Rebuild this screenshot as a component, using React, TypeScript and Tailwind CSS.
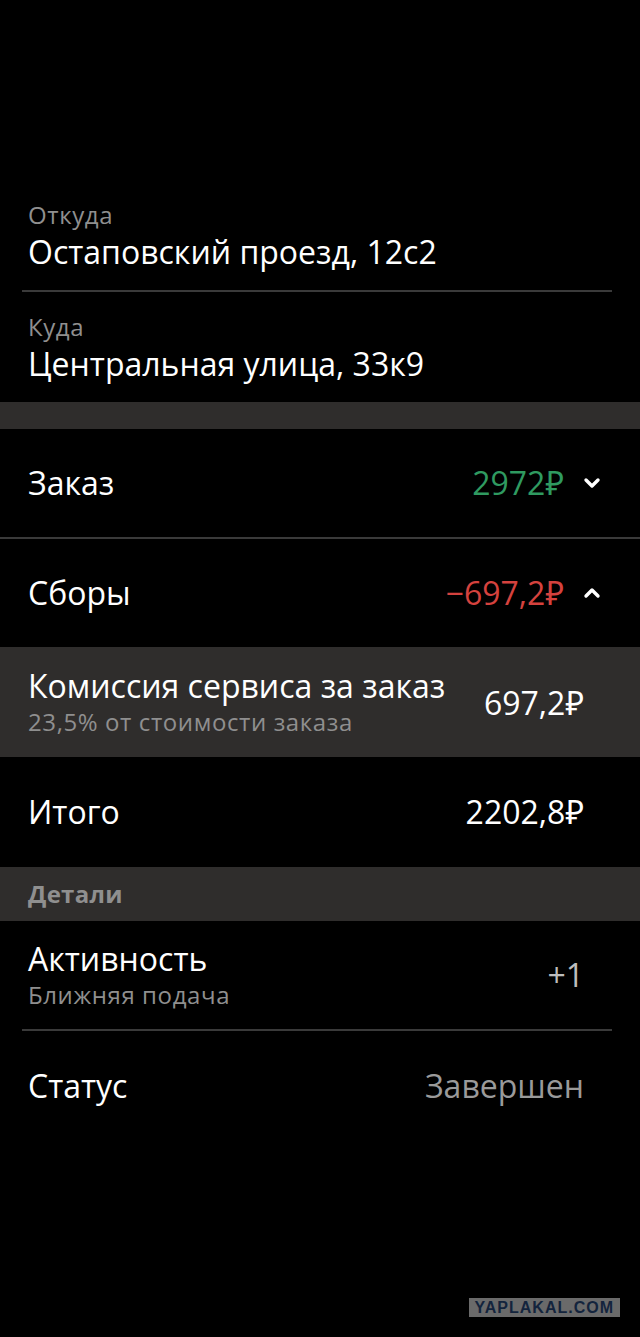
import { ChevronDown, ChevronUp } from "lucide-react";

const font = { fontFamily: '"Open Sans", "Noto Sans", sans-serif' };

function Row({ children, className = "" }: { children: React.ReactNode; className?: string }) {
  return <div className={`flex items-center justify-between pl-7 ${className}`}>{children}</div>;
}

export default function App() {
  return (
    <div className="min-h-[1337px] w-[640px] bg-black text-white flex flex-col" style={font}>
      {/* addresses */}
      <div className="pt-[200px] pl-[22px] pr-[28px]">
        <div className="px-[6px] pb-[18px] border-b-2 border-[#3a3a3a]">
          <div className="text-[24px] tracking-[0.6px] leading-[30px] text-[#8f8f8f]">Откуда</div>
          <div className="text-[32px] leading-[40px] mt-[2px]">Остаповский проезд, 12с2</div>
        </div>
        <div className="px-[6px] pt-[20px] pb-[18px]">
          <div className="text-[24px] tracking-[0.6px] leading-[30px] text-[#8f8f8f]">Куда</div>
          <div className="text-[32px] leading-[40px] mt-[2px]">Центральная улица, 33к9</div>
        </div>
      </div>
      <div className="h-[27px] bg-[#2f2d2c]" />

      {/* price */}
      <Row className="h-[110px] border-b-2 border-[#3a3a3a] pr-[36px]">
        <span className="text-[32px]">Заказ</span>
        <span className="flex items-center gap-[16px]">
          <span className="text-[32px] text-[#2f9a60]">2972₽</span>
          <ChevronDown size={24} strokeWidth={3.4} />
        </span>
      </Row>
      <Row className="h-[108px] pr-[36px]">
        <span className="text-[32px]">Сборы</span>
        <span className="flex items-center gap-[16px]">
          <span className="text-[32px] text-[#d5423e]">−697,2₽</span>
          <ChevronUp size={24} strokeWidth={3.4} />
        </span>
      </Row>
      <Row className="h-[110px] bg-[#2f2d2c] pr-[56px]">
        <div className="flex flex-col">
          <span className="text-[32px] leading-[40px]">Комиссия сервиса за заказ</span>
          <span className="text-[24px] tracking-[0.6px] leading-[32px] text-[#8f8f8f]">23,5% от стоимости заказа</span>
        </div>
        <span className="text-[32px] mt-[2px]">697,2₽</span>
      </Row>
      <Row className="h-[110px] pr-[56px]">
        <span className="text-[32px]">Итого</span>
        <span className="text-[32px]">2202,8₽</span>
      </Row>

      {/* details */}
      <div className="h-[54px] bg-[#2f2d2c] flex items-center pl-7">
        <span className="text-[24px] tracking-[0.3px] font-bold text-[#8f8f8f]">Детали</span>
      </div>
      <div className="pl-[22px] pr-[28px]">
        <div className="flex items-center justify-between pl-[6px] pr-[28px] h-[110px] border-b-2 border-[#3a3a3a]">
          <div className="flex flex-col">
            <span className="text-[32px] leading-[40px]">Активность</span>
            <span className="text-[24px] tracking-[0.6px] leading-[32px] text-[#8f8f8f]">Ближняя подача</span>
          </div>
          <span className="text-[32px] text-[#bdbdbd]">+1</span>
        </div>
        <div className="flex items-center justify-between pl-[6px] pr-[28px] h-[110px]">
          <span className="text-[32px]">Статус</span>
          <span className="text-[32px] text-[#9a9a9a]">Завершен</span>
        </div>
      </div>

      <div className="flex-1" />
      <div className="flex justify-end pr-[20px] pb-[20px]">
        <div
          className="bg-[#6a6a6a] px-[6px] h-[19px] flex items-center text-[16px] font-black tracking-[1px] text-[#13243d]"
          style={{ fontFamily: '"Liberation Sans", Arial, sans-serif' }}
        >
          YAPLAKAL.COM
        </div>
      </div>
    </div>
  );
}
